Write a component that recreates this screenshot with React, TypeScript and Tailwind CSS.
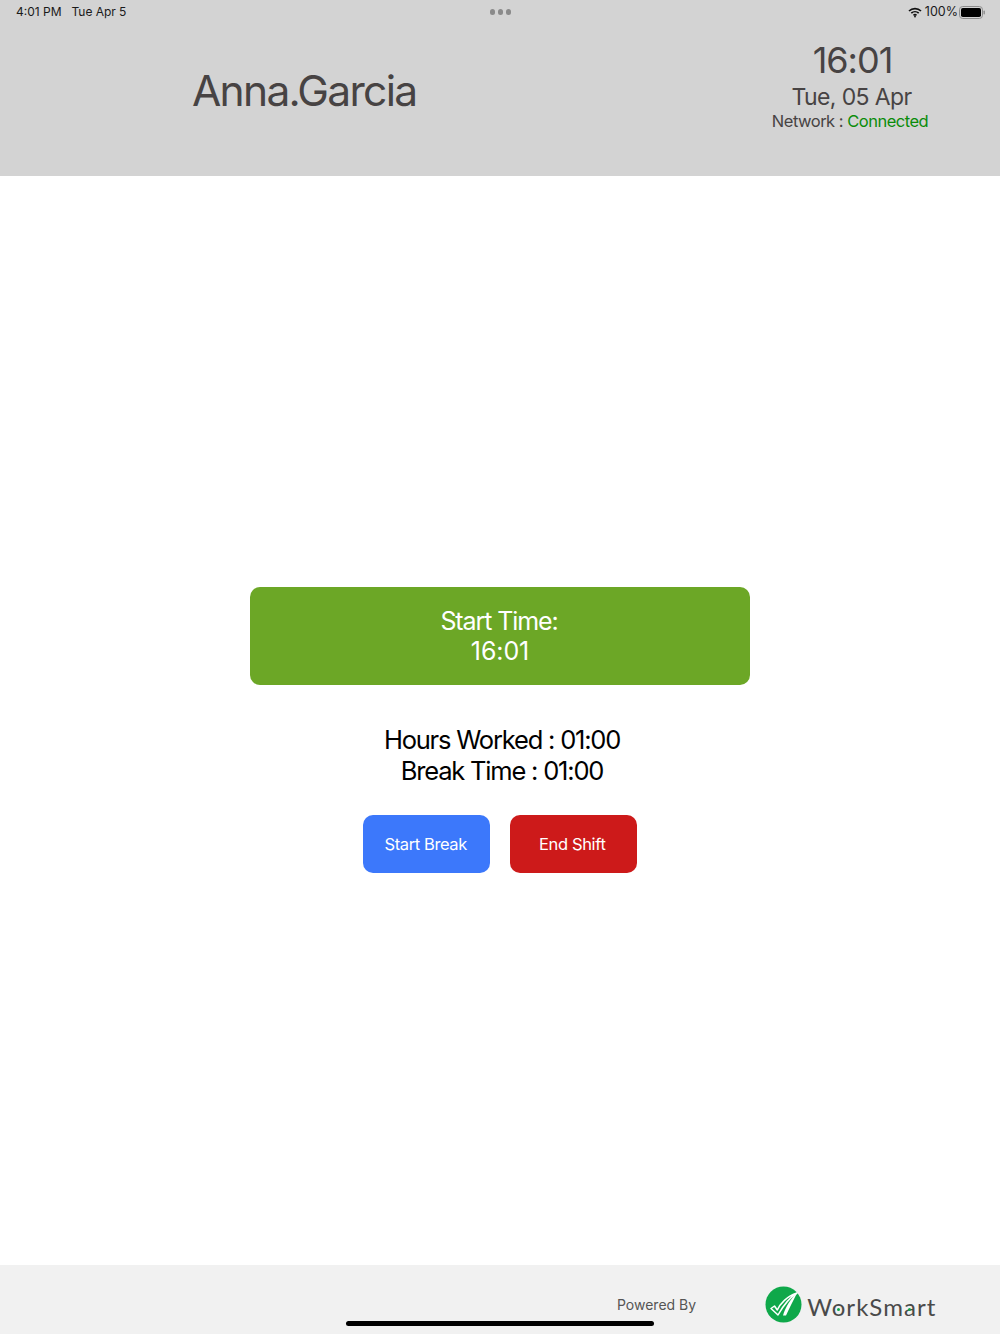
export default function App() {
  const font = { fontFamily: 'Inter, "Liberation Sans", sans-serif' };
  return (
    <div style={font} className="relative flex h-[1334px] w-[1000px] flex-col overflow-hidden bg-white">
      <header className="relative h-[176px] shrink-0 bg-[#d3d3d3] text-[#474343]">
        <div className="flex h-[24px] items-center justify-between pl-[16px] pr-[15px] text-[12px] text-[#1a1a1a]">
          <div className="flex w-[300px] gap-[10px]">
            <span>4:01 PM</span>
            <span className="tracking-[-0.05px]">Tue Apr 5</span>
          </div>
          <div className="flex gap-[2.5px]">
            <span className="h-[5.5px] w-[5.5px] rounded-full bg-[#8a8a8a]" />
            <span className="h-[5.5px] w-[5.5px] rounded-full bg-[#8a8a8a]" />
            <span className="h-[5.5px] w-[5.5px] rounded-full bg-[#8a8a8a]" />
          </div>
          <div className="flex w-[300px] items-center justify-end gap-[3px]">
            <svg width="14" height="11" viewBox="0 0 14 11" fill="none" stroke="#111" strokeWidth="1.7">
              <path d="M1 4 A8.6 8.6 0 0 1 13 4" />
              <path d="M3.3 6.2 A5.4 5.4 0 0 1 10.7 6.2" />
              <path d="M5.5 8.3 A2.4 2.4 0 0 1 8.5 8.3" />
              <circle cx="7" cy="9.6" r="0.9" fill="#111" stroke="none" />
            </svg>
            <span className="text-[12.5px]">100%</span>
            <svg width="26" height="13" viewBox="0 0 26 13" className="-ml-[2px]">
              <rect x="0.5" y="0.5" width="23" height="12" rx="3.2" fill="none" stroke="#8c8c8c" />
              <rect x="2" y="2" width="20" height="9" rx="1.8" fill="#000" />
              <rect x="24.5" y="4.5" width="1.4" height="4" rx="0.7" fill="#8c8c8c" />
            </svg>
          </div>
        </div>
        <div className="flex items-start justify-between pl-[192px] pr-[69px]">
          <div className="mt-[37px] text-[42.5px] leading-[60px] tracking-[-1.7px]">Anna.Garcia</div>
          <div className="flex w-[157px] flex-col items-center">
            <div className="mt-[14px] text-[36px] leading-[44px] tracking-[-1px]">16:01</div>
            <div className="pr-[2px] text-[23px] leading-[30px] tracking-[-0.6px]">Tue, 05 Apr</div>
            <div className="-mt-[1px] whitespace-nowrap pr-[5px] text-[16.5px] leading-[20px] tracking-[-0.5px]">
              Network : <span className="text-[#0a8c0a]">Connected</span>
            </div>
          </div>
        </div>
      </header>

      <main className="flex flex-1 flex-col items-center pt-[411px]">
        <div className="flex h-[98px] w-[500px] flex-col items-center justify-center rounded-[10px] bg-[#6ca726] text-[25px] leading-[30px] text-white">
          <div className="pr-[2px] tracking-[-1.1px]">Start Time:</div>
          <div className="tracking-[-0.1px]">16:01</div>
        </div>
        <div className="mt-[39px] flex flex-col items-center text-[25.5px] leading-[31px] tracking-[-1.2px] text-black">
          <div className="pl-[4px]">Hours Worked : 01:00</div>
          <div className="pl-[4px]">Break Time : 01:00</div>
        </div>
        <div className="mt-[29px] flex gap-[19.5px]">
          <div className="flex h-[58px] w-[127px] items-center justify-center rounded-[10px] bg-[#3c78fb] pr-[2px] text-[16.5px] tracking-[-0.4px] text-white">
            Start Break
          </div>
          <div className="flex h-[58px] w-[127px] items-center justify-center rounded-[10px] bg-[#cd1a1a] pr-[2px] text-[16.5px] tracking-[-0.35px] text-white">
            End Shift
          </div>
        </div>
      </main>

      <footer className="relative flex h-[69px] shrink-0 items-start bg-[#f1f1f1] pl-[617px]">
        <div className="mt-[31px] text-[14px] leading-[18px] text-[#555]">Powered By</div>
        <div className="ml-[69px] mt-[21px] flex items-center gap-[5px]">
          <svg width="37" height="37" viewBox="0 0 37 37">
            <circle cx="18.5" cy="18.5" r="18" fill="#0fa84a" />
            <path d="M6 22.5 L9.5 20 L12.3 24 C15 18 22 10 32 7 C24 12 18 20 13 29 Z" fill="none" stroke="#fff" strokeWidth="1.5" strokeLinejoin="round" />
            <path d="M18 29.5 C20.5 21 25.5 13 32 7 C28.5 14 24.5 22 21 29.5 Z" fill="#fff" />
          </svg>
          <div className="mt-[4px] font-['Lato'] text-[24px] leading-[30px] tracking-[1.05px] text-[#4a4a4a]">
            W
            <span className="relative">
              o
              <span className="absolute left-[5px] top-[16px] h-[3px] w-[3px] rounded-full bg-[#0fa84a]" />
            </span>
            rkSm
            <span className="relative">
              a
              <span className="absolute left-[4.5px] top-[16.5px] h-[3px] w-[3px] rounded-full bg-[#0fa84a]" />
            </span>
            rt
          </div>
        </div>
        <div className="absolute left-[346px] top-[56px] h-[5px] w-[308px] rounded-full bg-black" />
      </footer>
    </div>
  );
}
